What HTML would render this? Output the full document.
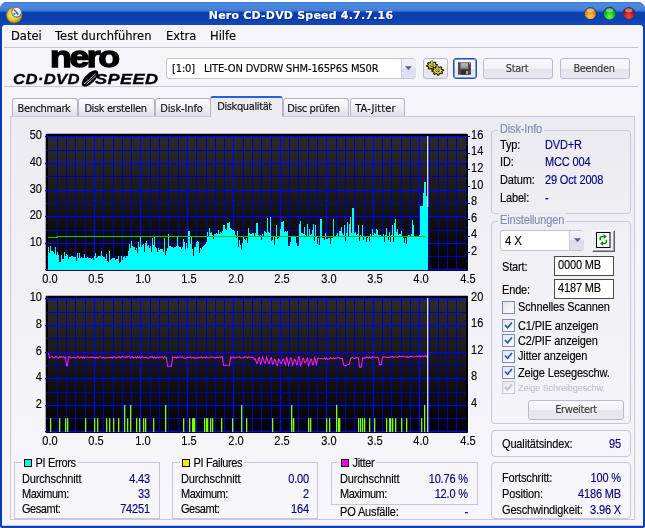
<!DOCTYPE html>
<html lang="de"><head><meta charset="utf-8"><title>Nero CD-DVD Speed 4.7.7.16</title>
<style>
html,body{margin:0;padding:0}
body{width:645px;height:528px;overflow:hidden;position:relative;background:#fff;font-family:"Liberation Sans",sans-serif;font-size:11px;letter-spacing:-.15px;color:#000;line-height:13px;-webkit-text-stroke:.13px}
.abs{position:absolute;white-space:nowrap}
#frame{left:0;top:2px;width:645px;height:526px;border-radius:7px 7px 2px 2px;background:#0b3fb4}
#title{left:0;top:2px;width:645px;height:23px;border-radius:7px 7px 0 0;background:linear-gradient(#3d7ad6 0,#4b8adf 2px,#4483da 8px,#2a63c8 9.5px,#0e41b0 10.5px,#0c3eac 16px,#1549b9 23px)}
#ttext{left:0;top:9px;text-shadow:1px 1px 0 #0a2c8a;width:602px;text-align:center;color:#fff;font:bold 11px "DejaVu Sans","Liberation Sans",sans-serif;letter-spacing:.2px}
#client{box-sizing:border-box;left:2px;top:25px;width:640.5px;height:501px;background:#f4f4f9;border-radius:3px 3px 0 0;border-bottom:1px solid #cbc7da}
.menu{font:11.5px "DejaVu Sans","Liberation Sans",sans-serif;top:29.3px;letter-spacing:0}
.sep{height:1px;background:#c6c6d4;left:4px;width:634px}
.tah{font-family:"DejaVu Sans Condensed","DejaVu Sans","Liberation Sans",sans-serif;font-size:11px;letter-spacing:-.38px}
.btn{box-sizing:border-box;border:1px solid #b9b9cb;border-radius:3px;background:linear-gradient(#f8f8fc 0,#f1f1f7 50%,#e4e4ee 50%,#e9e9f1 100%);color:#3a3a3a;text-align:center}
.tab{box-sizing:border-box;border:1px solid #b4b4c6;border-bottom:none;border-radius:3px 3px 0 0;background:linear-gradient(#fbfbfe,#ededf4 60%,#dfdfea);top:98px;height:18px;text-align:center;line-height:19.500px;padding-right:2px;color:#0c0c0c}
#panel{box-sizing:border-box;left:10px;top:116px;width:625px;height:404px;border:1px solid #c9c9d9;background:linear-gradient(#ebebf1,#f7f7fb)}
.grp{box-sizing:border-box;border:1px solid #c6c6d8}
.rg{border-radius:4px}
.gt{background:#f5f5fa;color:#7f8db1;padding:0 2px}
.val{color:#000080}
.ax{font-size:12px;letter-spacing:0;line-height:15px;height:15px;transform:scaleX(.92)}
.inp{box-sizing:border-box;border:1px solid #4a4a4a;background:#fff}
.cb{box-sizing:border-box;width:13px;height:13px;border:1px solid #7c8eae;background:linear-gradient(135deg,#e4e4ea,#fdfdfe);left:502px}
.lg{top:72.3px;font:italic bold 14.5px/14px "Liberation Sans",sans-serif;transform-origin:0 0;letter-spacing:.3px;-webkit-text-stroke:.3px #000}
.tx{transform:scaleY(1.08);transform-origin:0 79%}
.sq{box-sizing:border-box;width:8px;height:8px;border:1px solid #000}
</style></head><body><div id="root" style="position:absolute;left:0;top:0;width:645px;height:528px;will-change:transform">
<div id="frame" class="abs"></div>
<div id="title" class="abs"></div>
<!-- app icon -->
<svg class="abs" style="left:4px;top:3px" width="22" height="22" viewBox="0 0 22 22">
<defs><radialGradient id="gd" cx=".45" cy=".45" r=".6"><stop offset="0" stop-color="#fff6a0"/><stop offset=".55" stop-color="#e8cc30"/><stop offset="1" stop-color="#a88a10"/></radialGradient></defs>
<circle cx="10.2" cy="12.2" r="7.800" fill="url(#gd)" stroke="#8a7214" stroke-width=".6"/>
<circle cx="12.6" cy="9.2" r="4.9" fill="#e8ecf4" stroke="#6a6f7c" stroke-width="1.100"/>
<path d="M10 6.8l3 3" stroke="#e04020" stroke-width="1.6"/><path d="M12.4 9.4l2 2.2" stroke="#2080d0" stroke-width="2"/><circle cx="10.4" cy="11" r="1.1" fill="#30a040"/>
</svg>
<div id="ttext" class="abs">Nero CD-DVD Speed 4.7.7.16</div>
<svg class="abs" style="left:580px;top:4px" width="60" height="20" viewBox="0 0 60 20">
<defs>
<radialGradient id="bo" cx=".5" cy=".75" r=".7"><stop offset="0" stop-color="#ffc850"/><stop offset=".6" stop-color="#e89018"/><stop offset="1" stop-color="#a85c06"/></radialGradient>
<radialGradient id="bg" cx=".5" cy=".75" r=".7"><stop offset="0" stop-color="#60ff50"/><stop offset=".6" stop-color="#18b818"/><stop offset="1" stop-color="#0a6a0a"/></radialGradient>
<radialGradient id="br" cx=".5" cy=".75" r=".7"><stop offset="0" stop-color="#f05050"/><stop offset=".6" stop-color="#c01818"/><stop offset="1" stop-color="#700808"/></radialGradient>
</defs>
<circle cx="10.3" cy="9.6" r="6" fill="url(#bo)" stroke="#0a3290" stroke-width=".8"/>
<circle cx="29.6" cy="9.6" r="6.3" fill="url(#bg)" stroke="#0a3290" stroke-width=".8"/>
<circle cx="48.8" cy="9.6" r="6" fill="url(#br)" stroke="#0a3290" stroke-width=".8"/>
<ellipse cx="10.3" cy="6.3" rx="3.6" ry="2" fill="#fff" opacity=".45"/>
<ellipse cx="29.6" cy="6.3" rx="3.6" ry="2" fill="#fff" opacity=".45"/>
<ellipse cx="48.8" cy="6.3" rx="3.6" ry="2" fill="#fff" opacity=".45"/>
</svg>
<div id="client" class="abs"></div>
<!-- menu -->
<div class="abs menu" style="left:11px">Datei</div>
<div class="abs menu" style="left:55px">Test durchführen</div>
<div class="abs menu" style="left:166px">Extra</div>
<div class="abs menu" style="left:210px">Hilfe</div>
<div class="abs sep" style="top:47px"></div>
<div class="abs sep" style="top:86px"></div>
<!-- logo -->
<div class="abs" id="nero" style="left:49.9px;top:41.8px;font:bold 30px/30px 'Liberation Sans',sans-serif;letter-spacing:-2px;-webkit-text-stroke:1.3px #000;transform-origin:0 0;transform:scale(1.188,1)">nero</div>
<div class="abs lg" id="cds" style="left:13px;transform:scale(1.151,1)">CD·DVD</div><div class="abs lg" id="cds2" style="left:95px;transform:scale(1.253,1)">SPEED</div>
<svg class="abs" style="left:79px;top:70px" width="22" height="17" viewBox="0 0 22 17"><ellipse cx="11" cy="8.5" rx="10.5" ry="4.9" transform="rotate(-44 11 8.5)" fill="#000"/><path d="M5 14Q10 10.500 16.500 3.500M7.500 14.200Q12 10.500 17.200 5.500" stroke="#f3f3f9" stroke-width=".8" fill="none"/></svg>
<!-- drive combo -->
<div class="abs" style="box-sizing:border-box;left:166px;top:58px;width:250px;height:21px;border:1px solid #c3c3d3;border-radius:3px;background:#fff"></div>
<div class="abs" style="left:401px;top:59px;width:14px;height:19px;background:linear-gradient(#f0f0fa 0,#ebebf6 50%,#dcdcee 50%,#e0e0f0 100%);border-left:1px solid #c9c9dd;border-radius:0 2px 2px 0"></div>
<svg class="abs" style="left:405px;top:66px" width="7" height="4" viewBox="0 0 7 4"><path d="M0 .2h7L3.500 3.900z" fill="#5558a8"/></svg>
<div class="abs tah" style="left:172px;top:62px;letter-spacing:-.14px;white-space:pre">[1:0]   LITE-ON DVDRW SHM-165P6S MS0R</div>
<!-- toolbar buttons -->
<div class="abs btn" style="left:423px;top:58px;width:25px;height:21px"></div>
<svg class="abs" style="left:424px;top:59px" width="22" height="18" viewBox="0 0 22 18">
<g stroke="#1a1a00" stroke-width="1.1" fill="#f4ec00" stroke-linejoin="round">
<path d="M13.4 5.8L13.5 6.6L11.9 7.2L11.7 7.8L12.6 8.9L11.9 9.6L10.3 9.1L9.6 9.4L9.2 10.7L8.1 10.8L7.4 9.6L6.6 9.4L5.1 10.1L4.3 9.6L4.9 8.3L4.5 7.8L2.8 7.4L2.7 6.6L4.3 6.0L4.5 5.4L3.6 4.3L4.3 3.6L5.9 4.1L6.6 3.8L7.0 2.5L8.1 2.4L8.8 3.6L9.6 3.8L11.1 3.1L11.9 3.6L11.3 4.9L11.7 5.4Z"/><ellipse cx="8.1" cy="6.6" rx="1.7" ry="1.2" fill="#f3f3f9" stroke-width=".8"/>
<path d="M19.4 10.7L19.5 11.6L17.8 12.2L17.6 12.8L18.5 14.1L17.8 14.8L16.0 14.3L15.3 14.6L14.9 16.0L13.7 16.1L12.9 14.8L12.1 14.6L10.5 15.4L9.6 14.8L10.2 13.4L9.8 12.9L8.0 12.5L7.9 11.6L9.6 11.0L9.8 10.4L8.9 9.1L9.6 8.4L11.4 8.9L12.1 8.6L12.5 7.2L13.7 7.1L14.5 8.4L15.3 8.6L16.9 7.8L17.8 8.4L17.2 9.8L17.6 10.3Z"/><ellipse cx="13.7" cy="11.6" rx="1.8" ry="1.3" fill="#f3f3f9" stroke-width=".8"/>
</g>
<path d="M8.1 1.2V7M13.700 6.400V12" stroke="#8a8a8a" stroke-width="1.800"/><path d="M7.600 1.500V6.600M13.200 6.700V11.600" stroke="#d0d0d0" stroke-width=".7"/>
</svg>
<div class="abs btn" style="left:453px;top:58px;width:24px;height:21px;border:1px solid #2050c4;box-shadow:inset 0 0 0 1px #7d9fe6;border-radius:3px"></div>
<svg class="abs" style="left:458px;top:62px" width="14" height="13" viewBox="0 0 14 13"><path d="M0 .3h12.200l.8.800V12.700H0z" fill="#4c4c4c"/><rect x="2.500" y=".8" width="7.500" height="5.700" fill="#9c9c9c"/><rect x="3" y="1.300" width="6.500" height="2.500" fill="#b4b4b4"/><rect x="3" y="7.800" width="8" height="4.900" fill="#2e2e2e"/><rect x="8" y="8.800" width="2.200" height="3.500" fill="#a8a8a8"/><rect x="11.300" y="1.200" width="1" height="1" fill="#e0e0e0"/></svg>
<div class="abs btn tah" style="left:483px;top:58px;width:70px;height:21px;line-height:20.500px;padding-right:2px">Start</div>
<div class="abs btn tah" style="left:560px;top:58px;width:70px;height:21px;line-height:20.500px;padding-right:2px">Beenden</div>
<!-- tabs -->
<div class="abs tab tah" style="left:12px;width:66px">Benchmark</div>
<div class="abs tab tah" style="left:78px;width:77px">Disk erstellen</div>
<div class="abs tab tah" style="left:155px;width:56px;letter-spacing:-.1px;padding-right:3px">Disk-Info</div>
<div class="abs tab tah" style="left:283px;width:66px;padding-right:5px">Disc prüfen</div>
<div class="abs tab tah" style="left:350px;width:55px;padding-right:4px;letter-spacing:.1px">TA-Jitter</div>
<div id="panel" class="abs"></div>
<div class="abs tab tah" style="left:210px;width:73px;top:96px;height:21px;background:#ebebf1;border-top:2px solid #2463d6;line-height:18px;padding-right:4px">Diskqualität</div>

<svg class="abs" style="left:0;top:0" width="645" height="528" viewBox="0 0 645 528">
<defs>
<linearGradient id="cg" x1="0" y1="0" x2="0" y2="1"><stop offset="0" stop-color="#2b2b2b"/><stop offset="1" stop-color="#020202"/></linearGradient>
</defs>
<rect x="45.7" y="133.8" width="422.3" height="137.2" rx="1" fill="#000"/>
<rect x="48" y="136" width="418" height="134" fill="url(#cg)"/>
<line x1="57.5" y1="136" x2="57.5" y2="270" stroke="#0000b4" stroke-width="1"/>
<line x1="66.5" y1="136" x2="66.5" y2="270" stroke="#0000b4" stroke-width="1"/>
<line x1="75.5" y1="136" x2="75.5" y2="270" stroke="#0000b4" stroke-width="1"/>
<line x1="85.5" y1="136" x2="85.5" y2="270" stroke="#0000b4" stroke-width="1"/>
<line x1="94.5" y1="136" x2="94.5" y2="270" stroke="#0000ff" stroke-width="1.25"/>
<line x1="103.5" y1="136" x2="103.5" y2="270" stroke="#0000b4" stroke-width="1"/>
<line x1="113.5" y1="136" x2="113.5" y2="270" stroke="#0000b4" stroke-width="1"/>
<line x1="122.5" y1="136" x2="122.5" y2="270" stroke="#0000b4" stroke-width="1"/>
<line x1="131.5" y1="136" x2="131.5" y2="270" stroke="#0000b4" stroke-width="1"/>
<line x1="140.5" y1="136" x2="140.5" y2="270" stroke="#0000ff" stroke-width="1.25"/>
<line x1="150.5" y1="136" x2="150.5" y2="270" stroke="#0000b4" stroke-width="1"/>
<line x1="159.5" y1="136" x2="159.5" y2="270" stroke="#0000b4" stroke-width="1"/>
<line x1="168.5" y1="136" x2="168.5" y2="270" stroke="#0000b4" stroke-width="1"/>
<line x1="178.5" y1="136" x2="178.5" y2="270" stroke="#0000b4" stroke-width="1"/>
<line x1="187.5" y1="136" x2="187.5" y2="270" stroke="#0000ff" stroke-width="1.25"/>
<line x1="196.5" y1="136" x2="196.5" y2="270" stroke="#0000b4" stroke-width="1"/>
<line x1="206.5" y1="136" x2="206.5" y2="270" stroke="#0000b4" stroke-width="1"/>
<line x1="215.5" y1="136" x2="215.5" y2="270" stroke="#0000b4" stroke-width="1"/>
<line x1="224.5" y1="136" x2="224.5" y2="270" stroke="#0000b4" stroke-width="1"/>
<line x1="233.5" y1="136" x2="233.5" y2="270" stroke="#0000ff" stroke-width="1.25"/>
<line x1="243.5" y1="136" x2="243.5" y2="270" stroke="#0000b4" stroke-width="1"/>
<line x1="252.5" y1="136" x2="252.5" y2="270" stroke="#0000b4" stroke-width="1"/>
<line x1="261.5" y1="136" x2="261.5" y2="270" stroke="#0000b4" stroke-width="1"/>
<line x1="271.5" y1="136" x2="271.5" y2="270" stroke="#0000b4" stroke-width="1"/>
<line x1="280.5" y1="136" x2="280.5" y2="270" stroke="#0000ff" stroke-width="1.25"/>
<line x1="289.5" y1="136" x2="289.5" y2="270" stroke="#0000b4" stroke-width="1"/>
<line x1="298.5" y1="136" x2="298.5" y2="270" stroke="#0000b4" stroke-width="1"/>
<line x1="308.5" y1="136" x2="308.5" y2="270" stroke="#0000b4" stroke-width="1"/>
<line x1="317.5" y1="136" x2="317.5" y2="270" stroke="#0000b4" stroke-width="1"/>
<line x1="326.5" y1="136" x2="326.5" y2="270" stroke="#0000ff" stroke-width="1.25"/>
<line x1="336.5" y1="136" x2="336.5" y2="270" stroke="#0000b4" stroke-width="1"/>
<line x1="345.5" y1="136" x2="345.5" y2="270" stroke="#0000b4" stroke-width="1"/>
<line x1="354.5" y1="136" x2="354.5" y2="270" stroke="#0000b4" stroke-width="1"/>
<line x1="364.5" y1="136" x2="364.5" y2="270" stroke="#0000b4" stroke-width="1"/>
<line x1="373.5" y1="136" x2="373.5" y2="270" stroke="#0000ff" stroke-width="1.25"/>
<line x1="382.5" y1="136" x2="382.5" y2="270" stroke="#0000b4" stroke-width="1"/>
<line x1="391.5" y1="136" x2="391.5" y2="270" stroke="#0000b4" stroke-width="1"/>
<line x1="401.5" y1="136" x2="401.5" y2="270" stroke="#0000b4" stroke-width="1"/>
<line x1="410.5" y1="136" x2="410.5" y2="270" stroke="#0000b4" stroke-width="1"/>
<line x1="419.5" y1="136" x2="419.5" y2="270" stroke="#0000ff" stroke-width="1.25"/>
<line x1="429.5" y1="136" x2="429.5" y2="270" stroke="#0000b4" stroke-width="1"/>
<line x1="438.5" y1="136" x2="438.5" y2="270" stroke="#0000b4" stroke-width="1"/>
<line x1="447.5" y1="136" x2="447.5" y2="270" stroke="#0000b4" stroke-width="1"/>
<line x1="456.5" y1="136" x2="456.5" y2="270" stroke="#0000b4" stroke-width="1"/>
<line x1="45" y1="136.5" x2="466" y2="136.5" stroke="#0000ff" stroke-width="1.25"/>
<line x1="46" y1="150.5" x2="466" y2="150.5" stroke="#0000b4" stroke-width="1"/>
<line x1="45" y1="163.5" x2="466" y2="163.5" stroke="#0000ff" stroke-width="1.25"/>
<line x1="46" y1="176.5" x2="466" y2="176.5" stroke="#0000b4" stroke-width="1"/>
<line x1="45" y1="190.5" x2="466" y2="190.5" stroke="#0000ff" stroke-width="1.25"/>
<line x1="46" y1="203.5" x2="466" y2="203.5" stroke="#0000b4" stroke-width="1"/>
<line x1="45" y1="216.5" x2="466" y2="216.5" stroke="#0000ff" stroke-width="1.25"/>
<line x1="46" y1="230.5" x2="466" y2="230.5" stroke="#0000b4" stroke-width="1"/>
<line x1="45" y1="243.5" x2="466" y2="243.5" stroke="#0000ff" stroke-width="1.25"/>
<line x1="46" y1="256.5" x2="466" y2="256.5" stroke="#0000b4" stroke-width="1"/>
<line x1="45" y1="269.5" x2="466" y2="269.5" stroke="#0000ff" stroke-width="1.25"/>
<path d="M48 270.0V247H49V253H50V246H51V251H52V251H53V252H54V254H55V247H56V255H57V252H58V255H59V262H60V262H61V255H62V259H63V259H64V252H65V256H66V254H67V255H68V259H69V257H70V257H71V256H72V256H73V257H74V257H75V257H76V261H77V253H78V258H79V253H80V258H81V257H82V258H83V258H84V254H85V258H86V258H87V257H88V258H89V258H90V258H91V259H92V258H93V260H94V256H95V253H96V258H97V257H98V256H99V256H100V256H101V251H102V256H103V257H104V257H105V259H106V254H107V261H108V262H109V251H110V260H111V259H112V258H113V258H114V258H115V260H116V259H117V259H118V256H119V263H120V262H121V256H122V260H123V257H124V256H125V258H126V256H127V256H128V251H129V244H130V248H131V241H132V246H133V247H134V247H135V250H136V248H137V253H138V242H139V247H140V236H141V247H142V245H143V244H144V252H145V243H146V241H147V246H148V245H149V248H150V246H151V252H152V238H153V245H154V236H155V247H156V248H157V252H158V248H159V250H160V249H161V249H162V249H163V252H164V238H165V255H166V251H167V248H168V234H169V246H170V246H171V247H172V247H173V248H174V247H175V247H176V246H177V236H178V246H179V247H180V247H181V249H182V247H183V239H184V242H185V249H186V243H187V248H188V231H189V231H190V244H191V236H192V249H193V256H194V247H195V247H196V242H197V241H198V242H199V253H200V248H201V249H202V247H203V246H204V245H205V244H206V242H207V232H208V237H209V228H210V233H211V232H212V235H213V239H214V234H215V234H216V233H217V234H218V230H219V234H220V232H221V233H222V231H223V225H224V225H225V229H226V230H227V223H228V223H229V222H230V228H231V229H232V230H233V230H234V231H235V235H236V238H237V231H238V247H239V240H240V245H241V249H242V243H243V237H244V239H245V240H246V238H247V243H248V228H249V233H250V234H251V234H252V233H253V233H254V237H255V233H256V223H257V223H258V235H259V236H260V235H261V240H262V234H263V236H264V231H265V232H266V233H267V218H268V232H269V233H270V217H271V241H272V240H273V236H274V245H275V237H276V225H277V239H278V238H279V236H280V229H281V222H282V222H283V221H284V232H285V231H286V232H287V231H288V246H289V246H290V242H291V237H292V237H293V237H294V237H295V237H296V243H297V246H298V246H299V224H300V221H301V233H302V233H303V234H304V227H305V235H306V236H307V224H308V237H309V229H310V235H311V234H312V230H313V224H314V241H315V225H316V236H317V244H318V238H319V245H320V219H321V219H322V238H323V238H324V240H325V233H326V239H327V239H328V238H329V238H330V244H331V238H332V238H333V219H334V236H335V236H336V235H337V233H338V236H339V231H340V231H341V227H342V233H343V235H344V225H345V241H346V233H347V222H348V236H349V224H350V217H351V233H352V208H353V208H354V233H355V232H356V235H357V234H358V225H359V241H360V235H361V236H362V225H363V240H364V236H365V236H366V242H367V238H368V236H369V241H370V234H371V236H372V229H373V235H374V233H375V234H376V229H377V230H378V235H379V235H380V235H381V237H382V236H383V234H384V242H385V235H386V228H387V236H388V240H389V232H390V242H391V235H392V225H393V242H394V223H395V219H396V232H397V229H398V235H399V234H400V234H401V231H402V237H403V238H404V243H405V238H406V244H407V236H408V235H409V235H410V236H411V234H412V220H413V225H414V236H415V237H416V237H417V236H418V236H419V235H420V206H421V206H422V206H423V193H424V182H425V182H426V196H427V198H428V270.0Z" fill="#00ffff"/>
<path d="M48 237.5H57V236.5H426" stroke="#00d000" stroke-width="1.2" fill="none"/>
<rect x="427.1" y="136" width="1.2" height="71" fill="#e8e8e8"/>
<rect x="45.7" y="295.8" width="422.3" height="137.2" rx="1" fill="#000"/>
<rect x="48" y="298" width="418" height="134" fill="url(#cg)"/>
<line x1="57.5" y1="298" x2="57.5" y2="432" stroke="#0000b4" stroke-width="1"/>
<line x1="66.5" y1="298" x2="66.5" y2="432" stroke="#0000b4" stroke-width="1"/>
<line x1="75.5" y1="298" x2="75.5" y2="432" stroke="#0000b4" stroke-width="1"/>
<line x1="85.5" y1="298" x2="85.5" y2="432" stroke="#0000b4" stroke-width="1"/>
<line x1="94.5" y1="298" x2="94.5" y2="432" stroke="#0000ff" stroke-width="1.25"/>
<line x1="103.5" y1="298" x2="103.5" y2="432" stroke="#0000b4" stroke-width="1"/>
<line x1="113.5" y1="298" x2="113.5" y2="432" stroke="#0000b4" stroke-width="1"/>
<line x1="122.5" y1="298" x2="122.5" y2="432" stroke="#0000b4" stroke-width="1"/>
<line x1="131.5" y1="298" x2="131.5" y2="432" stroke="#0000b4" stroke-width="1"/>
<line x1="140.5" y1="298" x2="140.5" y2="432" stroke="#0000ff" stroke-width="1.25"/>
<line x1="150.5" y1="298" x2="150.5" y2="432" stroke="#0000b4" stroke-width="1"/>
<line x1="159.5" y1="298" x2="159.5" y2="432" stroke="#0000b4" stroke-width="1"/>
<line x1="168.5" y1="298" x2="168.5" y2="432" stroke="#0000b4" stroke-width="1"/>
<line x1="178.5" y1="298" x2="178.5" y2="432" stroke="#0000b4" stroke-width="1"/>
<line x1="187.5" y1="298" x2="187.5" y2="432" stroke="#0000ff" stroke-width="1.25"/>
<line x1="196.5" y1="298" x2="196.5" y2="432" stroke="#0000b4" stroke-width="1"/>
<line x1="206.5" y1="298" x2="206.5" y2="432" stroke="#0000b4" stroke-width="1"/>
<line x1="215.5" y1="298" x2="215.5" y2="432" stroke="#0000b4" stroke-width="1"/>
<line x1="224.5" y1="298" x2="224.5" y2="432" stroke="#0000b4" stroke-width="1"/>
<line x1="233.5" y1="298" x2="233.5" y2="432" stroke="#0000ff" stroke-width="1.25"/>
<line x1="243.5" y1="298" x2="243.5" y2="432" stroke="#0000b4" stroke-width="1"/>
<line x1="252.5" y1="298" x2="252.5" y2="432" stroke="#0000b4" stroke-width="1"/>
<line x1="261.5" y1="298" x2="261.5" y2="432" stroke="#0000b4" stroke-width="1"/>
<line x1="271.5" y1="298" x2="271.5" y2="432" stroke="#0000b4" stroke-width="1"/>
<line x1="280.5" y1="298" x2="280.5" y2="432" stroke="#0000ff" stroke-width="1.25"/>
<line x1="289.5" y1="298" x2="289.5" y2="432" stroke="#0000b4" stroke-width="1"/>
<line x1="298.5" y1="298" x2="298.5" y2="432" stroke="#0000b4" stroke-width="1"/>
<line x1="308.5" y1="298" x2="308.5" y2="432" stroke="#0000b4" stroke-width="1"/>
<line x1="317.5" y1="298" x2="317.5" y2="432" stroke="#0000b4" stroke-width="1"/>
<line x1="326.5" y1="298" x2="326.5" y2="432" stroke="#0000ff" stroke-width="1.25"/>
<line x1="336.5" y1="298" x2="336.5" y2="432" stroke="#0000b4" stroke-width="1"/>
<line x1="345.5" y1="298" x2="345.5" y2="432" stroke="#0000b4" stroke-width="1"/>
<line x1="354.5" y1="298" x2="354.5" y2="432" stroke="#0000b4" stroke-width="1"/>
<line x1="364.5" y1="298" x2="364.5" y2="432" stroke="#0000b4" stroke-width="1"/>
<line x1="373.5" y1="298" x2="373.5" y2="432" stroke="#0000ff" stroke-width="1.25"/>
<line x1="382.5" y1="298" x2="382.5" y2="432" stroke="#0000b4" stroke-width="1"/>
<line x1="391.5" y1="298" x2="391.5" y2="432" stroke="#0000b4" stroke-width="1"/>
<line x1="401.5" y1="298" x2="401.5" y2="432" stroke="#0000b4" stroke-width="1"/>
<line x1="410.5" y1="298" x2="410.5" y2="432" stroke="#0000b4" stroke-width="1"/>
<line x1="419.5" y1="298" x2="419.5" y2="432" stroke="#0000ff" stroke-width="1.25"/>
<line x1="429.5" y1="298" x2="429.5" y2="432" stroke="#0000b4" stroke-width="1"/>
<line x1="438.5" y1="298" x2="438.5" y2="432" stroke="#0000b4" stroke-width="1"/>
<line x1="447.5" y1="298" x2="447.5" y2="432" stroke="#0000b4" stroke-width="1"/>
<line x1="456.5" y1="298" x2="456.5" y2="432" stroke="#0000b4" stroke-width="1"/>
<line x1="45" y1="298.5" x2="466" y2="298.5" stroke="#0000ff" stroke-width="1.25"/>
<line x1="46" y1="312.5" x2="466" y2="312.5" stroke="#0000b4" stroke-width="1"/>
<line x1="45" y1="325.5" x2="466" y2="325.5" stroke="#0000ff" stroke-width="1.25"/>
<line x1="46" y1="338.5" x2="466" y2="338.5" stroke="#0000b4" stroke-width="1"/>
<line x1="45" y1="352.5" x2="466" y2="352.5" stroke="#0000ff" stroke-width="1.25"/>
<line x1="46" y1="365.5" x2="466" y2="365.5" stroke="#0000b4" stroke-width="1"/>
<line x1="45" y1="378.5" x2="466" y2="378.5" stroke="#0000ff" stroke-width="1.25"/>
<line x1="46" y1="392.5" x2="466" y2="392.5" stroke="#0000b4" stroke-width="1"/>
<line x1="45" y1="405.5" x2="466" y2="405.5" stroke="#0000ff" stroke-width="1.25"/>
<line x1="46" y1="418.5" x2="466" y2="418.5" stroke="#0000b4" stroke-width="1"/>
<line x1="45" y1="431.5" x2="466" y2="431.5" stroke="#0000ff" stroke-width="1.25"/>
<g fill="#80ff00"><rect x="50" y="418.2" width="1.3" height="13.8"/>
<rect x="59" y="418.2" width="1.3" height="13.8"/>
<rect x="65" y="418.2" width="1.3" height="13.8"/>
<rect x="67" y="418.2" width="1.3" height="13.8"/>
<rect x="85" y="418.2" width="1.3" height="13.8"/>
<rect x="94" y="418.2" width="1.3" height="13.8"/>
<rect x="97" y="418.2" width="1.3" height="13.8"/>
<rect x="106" y="418.2" width="1.3" height="13.8"/>
<rect x="109" y="418.2" width="1.3" height="13.8"/>
<rect x="113" y="418.2" width="1.3" height="13.8"/>
<rect x="118" y="418.2" width="1.3" height="13.8"/>
<rect x="127" y="418.2" width="1.3" height="13.8"/>
<rect x="136" y="418.2" width="1.3" height="13.8"/>
<rect x="139" y="418.2" width="1.3" height="13.8"/>
<rect x="143" y="418.2" width="1.3" height="13.8"/>
<rect x="145" y="418.2" width="1.3" height="13.8"/>
<rect x="153" y="418.2" width="1.3" height="13.8"/>
<rect x="183" y="418.2" width="1.3" height="13.8"/>
<rect x="189" y="418.2" width="1.3" height="13.8"/>
<rect x="192" y="418.2" width="1.3" height="13.8"/>
<rect x="193" y="418.2" width="1.3" height="13.8"/>
<rect x="194" y="418.2" width="1.3" height="13.8"/>
<rect x="204" y="418.2" width="1.3" height="13.8"/>
<rect x="206" y="418.2" width="1.3" height="13.8"/>
<rect x="207" y="418.2" width="1.3" height="13.8"/>
<rect x="210" y="418.2" width="1.3" height="13.8"/>
<rect x="212" y="418.2" width="1.3" height="13.8"/>
<rect x="221" y="418.2" width="1.3" height="13.8"/>
<rect x="232" y="418.2" width="1.3" height="13.8"/>
<rect x="246" y="418.2" width="1.3" height="13.8"/>
<rect x="272" y="418.2" width="1.3" height="13.8"/>
<rect x="291" y="418.2" width="1.3" height="13.8"/>
<rect x="293" y="418.2" width="1.3" height="13.8"/>
<rect x="308" y="418.2" width="1.3" height="13.8"/>
<rect x="310" y="418.2" width="1.3" height="13.8"/>
<rect x="326" y="418.2" width="1.3" height="13.8"/>
<rect x="329" y="418.2" width="1.3" height="13.8"/>
<rect x="338" y="418.2" width="1.3" height="13.8"/>
<rect x="339" y="418.2" width="1.3" height="13.8"/>
<rect x="358" y="418.2" width="1.3" height="13.8"/>
<rect x="360" y="418.2" width="1.3" height="13.8"/>
<rect x="362" y="418.2" width="1.3" height="13.8"/>
<rect x="364" y="418.2" width="1.3" height="13.8"/>
<rect x="369" y="418.2" width="1.3" height="13.8"/>
<rect x="374" y="418.2" width="1.3" height="13.8"/>
<rect x="386" y="418.2" width="1.3" height="13.8"/>
<rect x="389" y="418.2" width="1.3" height="13.8"/>
<rect x="390" y="418.2" width="1.3" height="13.8"/>
<rect x="392" y="418.2" width="1.3" height="13.8"/>
<rect x="395" y="418.2" width="1.3" height="13.8"/>
<rect x="401" y="418.2" width="1.3" height="13.8"/>
<rect x="406" y="418.2" width="1.3" height="13.8"/>
<rect x="421" y="418.2" width="1.3" height="13.8"/>
<rect x="124" y="404.9" width="1.3" height="27.1"/>
<rect x="130" y="404.9" width="1.3" height="27.1"/>
<rect x="165" y="404.9" width="1.3" height="27.1"/>
<rect x="241" y="404.9" width="1.3" height="27.1"/>
<rect x="291" y="404.9" width="1.3" height="27.1"/>
<rect x="336" y="404.9" width="1.3" height="27.1"/>
<rect x="424" y="404.9" width="1.3" height="27.1"/></g>
<path d="M48.5 353.0L49.5 358.0L50.5 357.4L51.5 356.9L52.5 356.6L53.5 357.8L54.5 357.9L55.5 356.6L56.5 356.6L57.5 357.4L58.5 358.1L59.5 356.7L60.5 357.5L61.5 356.7L62.5 357.2L63.5 356.8L64.5 357.9L65.5 356.9L66.5 365.7L67.5 365.7L68.5 356.8L69.5 356.8L70.5 357.9L71.5 357.8L72.5 357.5L73.5 357.3L74.5 357.5L75.5 358.0L76.5 357.8L77.5 357.0L78.5 356.7L79.5 358.1L80.5 357.3L81.5 356.9L82.5 358.1L83.5 356.8L84.5 358.0L85.5 357.2L86.5 357.3L87.5 357.1L88.5 357.7L89.5 357.5L90.5 357.2L91.5 357.5L92.5 357.1L93.5 357.4L94.5 357.5L95.5 358.1L96.5 357.2L97.5 357.4L98.5 357.8L99.5 356.9L100.5 356.9L101.5 357.4L102.5 357.9L103.5 357.4L104.5 358.0L105.5 357.9L106.5 357.5L107.5 358.0L108.5 357.4L109.5 357.3L110.5 358.1L111.5 357.1L112.5 358.0L113.5 357.0L114.5 356.9L115.5 357.3L116.5 358.1L117.5 357.3L118.5 357.5L119.5 356.6L120.5 357.9L121.5 356.8L122.5 356.6L123.5 357.0L124.5 356.8L125.5 357.8L126.5 356.6L127.5 357.4L128.5 356.6L129.5 356.7L130.5 357.9L131.5 356.9L132.5 356.7L133.5 358.0L134.5 357.6L135.5 356.9L136.5 357.9L137.5 356.7L138.5 357.7L139.5 356.8L140.5 357.9L141.5 357.3L142.5 356.7L143.5 357.8L144.5 357.7L145.5 357.3L146.5 357.6L147.5 358.1L148.5 357.9L149.5 357.9L150.5 356.7L151.5 357.1L152.5 356.7L153.5 357.9L154.5 356.9L155.5 358.0L156.5 357.3L157.5 357.1L158.5 357.6L159.5 356.8L160.5 357.3L161.5 357.2L162.5 356.7L163.5 358.0L164.5 356.6L165.5 357.1L166.5 357.5L167.5 366.3L168.5 366.3L169.5 366.3L170.5 366.3L171.5 366.3L172.5 356.9L173.5 357.4L174.5 357.9L175.5 357.0L176.5 358.1L177.5 356.8L178.5 357.7L179.5 357.1L180.5 356.6L181.5 357.2L182.5 357.1L183.5 357.7L184.5 358.1L185.5 358.1L186.5 357.9L187.5 357.2L188.5 357.5L189.5 357.3L190.5 356.7L191.5 357.9L192.5 357.8L193.5 357.1L194.5 358.1L195.5 358.1L196.5 357.6L197.5 358.0L198.5 357.6L199.5 357.8L200.5 357.2L201.5 357.2L202.5 357.8L203.5 357.2L204.5 357.4L205.5 357.9L206.5 356.7L207.5 357.8L208.5 357.9L209.5 358.0L210.5 357.1L211.5 356.8L212.5 356.9L213.5 357.5L214.5 357.7L215.5 358.1L216.5 357.1L217.5 357.3L218.5 357.6L219.5 357.1L220.5 357.4L221.5 356.7L222.5 357.0L223.5 365.3L224.5 365.3L225.5 365.3L226.5 365.3L227.5 365.3L228.5 365.3L229.5 365.3L230.5 356.9L231.5 358.1L232.5 357.3L233.5 356.6L234.5 357.9L235.5 357.8L236.5 357.2L237.5 357.3L238.5 357.1L239.5 356.9L240.5 357.9L241.5 357.7L242.5 357.7L243.5 358.1L244.5 356.7L245.5 356.9L246.5 357.0L247.5 358.1L248.5 356.8L249.5 357.0L250.5 357.4L251.5 357.0L252.5 357.4L253.5 357.8L254.5 359.5L255.5 359.1L256.5 363.1L257.5 363.1L258.5 358.3L259.5 357.5L260.5 364.7L261.5 362.1L262.5 357.1L263.5 359.4L264.5 362.9L265.5 362.9L266.5 357.1L267.5 359.5L268.5 363.4L269.5 363.2L270.5 358.6L271.5 357.8L272.5 364.1L273.5 363.6L274.5 359.6L275.5 360.1L276.5 365.1L277.5 365.3L278.5 359.1L279.5 360.2L280.5 363.1L281.5 363.1L282.5 360.1L283.5 359.0L284.5 362.7L285.5 365.4L286.5 357.0L287.5 360.0L288.5 365.3L289.5 362.6L290.5 358.0L291.5 358.0L292.5 365.3L293.5 362.9L294.5 359.2L295.5 360.3L296.5 364.6L297.5 364.3L298.5 356.8L299.5 357.2L300.5 365.6L301.5 364.1L302.5 359.1L303.5 358.4L304.5 362.5L305.5 362.7L306.5 360.3L307.5 357.6L308.5 365.6L309.5 363.9L310.5 359.7L311.5 359.1L312.5 364.7L313.5 364.6L314.5 357.8L315.5 359.9L316.5 365.4L317.5 358.2L318.5 358.3L319.5 358.2L320.5 358.4L321.5 358.8L322.5 358.7L323.5 358.7L324.5 357.9L325.5 359.2L326.5 357.9L327.5 359.2L328.5 358.9L329.5 358.8L330.5 357.7L331.5 358.4L332.5 358.5L333.5 357.7L334.5 358.7L335.5 358.3L336.5 358.2L337.5 357.8L338.5 357.8L339.5 358.0L340.5 358.4L341.5 358.4L342.5 358.7L343.5 364.9L344.5 365.3L345.5 365.7L346.5 365.2L347.5 364.8L348.5 364.3L349.5 363.9L350.5 358.6L351.5 358.0L352.5 357.3L353.5 358.3L354.5 358.4L355.5 358.2L356.5 357.5L357.5 357.3L358.5 358.3L359.5 367.1L360.5 367.1L361.5 367.0L362.5 357.7L363.5 358.2L364.5 357.9L365.5 358.1L366.5 356.9L367.5 357.2L368.5 358.2L369.5 356.8L370.5 358.2L371.5 357.7L372.5 356.7L373.5 357.0L374.5 357.1L375.5 357.5L376.5 357.9L377.5 357.2L378.5 358.0L379.5 364.6L380.5 364.6L381.5 364.6L382.5 357.4L383.5 356.8L384.5 356.9L385.5 357.2L386.5 357.0L387.5 357.2L388.5 357.7L389.5 357.0L390.5 357.2L391.5 356.7L392.5 356.4L393.5 357.1L394.5 356.9L395.5 356.6L396.5 357.1L397.5 357.4L398.5 356.6L399.5 356.3L400.5 356.4L401.5 356.5L402.5 356.3L403.5 356.5L404.5 356.6L405.5 356.8L406.5 357.1L407.5 356.5L408.5 357.4L409.5 356.8L410.5 356.2L411.5 356.3L412.5 356.4L413.5 357.0L414.5 356.7L415.5 356.6L416.5 356.3L417.5 356.7L418.5 356.2L419.5 355.8L420.5 357.0L421.5 356.2L422.5 356.0L423.5 356.6L424.5 356.4L425.5 355.6L426.5 357.1L427.5 356.2" stroke="#f41cf4" stroke-width="1.05" fill="none"/>
<rect x="427.1" y="298" width="1.2" height="134" fill="#e8e8e8"/>
</svg>

<div class="abs ax" style="left:34.6px;width:30px;text-align:center;transform-origin:50% 50%;top:271.9px">0.0</div>
<div class="abs ax" style="left:34.6px;width:30px;text-align:center;transform-origin:50% 50%;top:433.9px">0.0</div>
<div class="abs ax" style="left:81.1px;width:30px;text-align:center;transform-origin:50% 50%;top:271.9px">0.5</div>
<div class="abs ax" style="left:81.1px;width:30px;text-align:center;transform-origin:50% 50%;top:433.9px">0.5</div>
<div class="abs ax" style="left:127.5px;width:30px;text-align:center;transform-origin:50% 50%;top:271.9px">1.0</div>
<div class="abs ax" style="left:127.5px;width:30px;text-align:center;transform-origin:50% 50%;top:433.9px">1.0</div>
<div class="abs ax" style="left:174.0px;width:30px;text-align:center;transform-origin:50% 50%;top:271.9px">1.5</div>
<div class="abs ax" style="left:174.0px;width:30px;text-align:center;transform-origin:50% 50%;top:433.9px">1.5</div>
<div class="abs ax" style="left:220.5px;width:30px;text-align:center;transform-origin:50% 50%;top:271.9px">2.0</div>
<div class="abs ax" style="left:220.5px;width:30px;text-align:center;transform-origin:50% 50%;top:433.9px">2.0</div>
<div class="abs ax" style="left:267.0px;width:30px;text-align:center;transform-origin:50% 50%;top:271.9px">2.5</div>
<div class="abs ax" style="left:267.0px;width:30px;text-align:center;transform-origin:50% 50%;top:433.9px">2.5</div>
<div class="abs ax" style="left:313.5px;width:30px;text-align:center;transform-origin:50% 50%;top:271.9px">3.0</div>
<div class="abs ax" style="left:313.5px;width:30px;text-align:center;transform-origin:50% 50%;top:433.9px">3.0</div>
<div class="abs ax" style="left:359.9px;width:30px;text-align:center;transform-origin:50% 50%;top:271.9px">3.5</div>
<div class="abs ax" style="left:359.9px;width:30px;text-align:center;transform-origin:50% 50%;top:433.9px">3.5</div>
<div class="abs ax" style="left:406.4px;width:30px;text-align:center;transform-origin:50% 50%;top:271.9px">4.0</div>
<div class="abs ax" style="left:406.4px;width:30px;text-align:center;transform-origin:50% 50%;top:433.9px">4.0</div>
<div class="abs ax" style="left:452.9px;width:30px;text-align:center;transform-origin:50% 50%;top:271.9px">4.5</div>
<div class="abs ax" style="left:452.9px;width:30px;text-align:center;transform-origin:50% 50%;top:433.9px">4.5</div>
<div class="abs ax" style="left:11.8px;width:30px;text-align:right;transform-origin:100% 50%;top:127.5px">50</div>
<div class="abs ax" style="left:11.8px;width:30px;text-align:right;transform-origin:100% 50%;top:154.5px">40</div>
<div class="abs ax" style="left:11.8px;width:30px;text-align:right;transform-origin:100% 50%;top:181.5px">30</div>
<div class="abs ax" style="left:11.8px;width:30px;text-align:right;transform-origin:100% 50%;top:207.5px">20</div>
<div class="abs ax" style="left:11.8px;width:30px;text-align:right;transform-origin:100% 50%;top:234.5px">10</div>
<div class="abs ax" style="left:11.8px;width:30px;text-align:right;transform-origin:100% 50%;top:289.5px">10</div>
<div class="abs ax" style="left:11.8px;width:30px;text-align:right;transform-origin:100% 50%;top:316.5px">8</div>
<div class="abs ax" style="left:11.8px;width:30px;text-align:right;transform-origin:100% 50%;top:343.5px">6</div>
<div class="abs ax" style="left:11.8px;width:30px;text-align:right;transform-origin:100% 50%;top:369.5px">4</div>
<div class="abs ax" style="left:11.8px;width:30px;text-align:right;transform-origin:100% 50%;top:396.5px">2</div>
<div class="abs" style="left:466px;top:260.7px;width:2px;height:1px;background:#0000e0"></div>
<div class="abs ax" style="left:470.6px;transform-origin:0 50%;top:244.0px">2</div>
<div class="abs" style="left:466px;top:252.4px;width:4px;height:1px;background:#0000ff"></div>
<div class="abs" style="left:466px;top:244.1px;width:2px;height:1px;background:#0000e0"></div>
<div class="abs ax" style="left:470.6px;transform-origin:0 50%;top:227.3px">4</div>
<div class="abs" style="left:466px;top:235.8px;width:4px;height:1px;background:#0000ff"></div>
<div class="abs" style="left:466px;top:227.4px;width:2px;height:1px;background:#0000e0"></div>
<div class="abs ax" style="left:470.6px;transform-origin:0 50%;top:210.7px">6</div>
<div class="abs" style="left:466px;top:219.1px;width:4px;height:1px;background:#0000ff"></div>
<div class="abs" style="left:466px;top:210.8px;width:2px;height:1px;background:#0000e0"></div>
<div class="abs ax" style="left:470.6px;transform-origin:0 50%;top:194.1px">8</div>
<div class="abs" style="left:466px;top:202.5px;width:4px;height:1px;background:#0000ff"></div>
<div class="abs" style="left:466px;top:194.2px;width:2px;height:1px;background:#0000e0"></div>
<div class="abs ax" style="left:470.6px;transform-origin:0 50%;top:177.5px">10</div>
<div class="abs" style="left:466px;top:185.9px;width:4px;height:1px;background:#0000ff"></div>
<div class="abs" style="left:466px;top:177.6px;width:2px;height:1px;background:#0000e0"></div>
<div class="abs ax" style="left:470.6px;transform-origin:0 50%;top:160.8px">12</div>
<div class="abs" style="left:466px;top:169.2px;width:4px;height:1px;background:#0000ff"></div>
<div class="abs" style="left:466px;top:160.9px;width:2px;height:1px;background:#0000e0"></div>
<div class="abs ax" style="left:470.6px;transform-origin:0 50%;top:144.2px">14</div>
<div class="abs" style="left:466px;top:152.6px;width:4px;height:1px;background:#0000ff"></div>
<div class="abs" style="left:466px;top:144.3px;width:2px;height:1px;background:#0000e0"></div>
<div class="abs ax" style="left:470.6px;transform-origin:0 50%;top:127.6px">16</div>
<div class="abs" style="left:466px;top:136.0px;width:4px;height:1px;background:#0000ff"></div>
<div class="abs ax" style="left:470.6px;transform-origin:0 50%;top:289.6px">20</div>
<div class="abs ax" style="left:470.6px;transform-origin:0 50%;top:316.2px">16</div>
<div class="abs ax" style="left:470.6px;transform-origin:0 50%;top:342.8px">12</div>
<div class="abs ax" style="left:470.6px;transform-origin:0 50%;top:369.4px">8</div>
<div class="abs ax" style="left:470.6px;transform-origin:0 50%;top:396.0px">4</div>
<!-- right column -->
<div class="abs grp rg" style="left:491px;top:129.500px;width:139.500px;height:84px"></div>
<div class="abs gt tx" style="left:498px;top:123px;background:#ebebf1">Disk-Info</div>
<div class="abs tx" style="left:500px;top:138.500px">Typ:</div><div class="abs val tx" style="left:545px;top:138.500px">DVD+R</div>
<div class="abs tx" style="left:500px;top:156px">ID:</div><div class="abs val tx" style="left:545px;top:156px">MCC 004</div>
<div class="abs tx" style="left:500px;top:174px">Datum:</div><div class="abs val tx" style="left:545px;top:174px">29 Oct 2008</div>
<div class="abs tx" style="left:500px;top:192px">Label:</div><div class="abs val tx" style="left:545px;top:192px">-</div>
<div class="abs grp rg" style="left:491px;top:221px;width:139.500px;height:203px"></div>
<div class="abs gt tx" style="left:498px;top:214px;background:#eeeef4">Einstellungen</div>
<div class="abs" style="box-sizing:border-box;left:500px;top:230px;width:84px;height:21px;border:1px solid #c3c3d3;border-radius:3px;background:#fff"></div>
<div class="abs" style="left:569px;top:231px;width:14px;height:19px;background:linear-gradient(#f0f0fa 0,#ebebf6 50%,#dcdcee 50%,#e0e0f0 100%);border-left:1px solid #c9c9dd;border-radius:0 2px 2px 0"></div>
<svg class="abs" style="left:573.500px;top:238.200px" width="7" height="4" viewBox="0 0 7 4"><path d="M0 .2h7L3.500 3.900z" fill="#5558a8"/></svg>
<div class="abs tx" style="left:505px;top:235px;font-size:11.5px">4 X</div>
<div class="abs" style="box-sizing:border-box;left:592px;top:229.500px;width:23px;height:22.500px;background:#eeeef4;border:1px solid;border-color:#fff #5e5e68 #5e5e68 #fff;box-shadow:inset -1px -1px 0 #a4a4b0"></div>
<svg class="abs" style="left:596px;top:232px" width="15" height="16" viewBox="0 0 15 16"><rect x=".5" y=".5" width="13.500" height="15" fill="#fff" stroke="#000"/><path d="M4.200 8.200V6.500Q4.200 4.500 6.200 4.500H8" stroke="#0a8a0a" stroke-width="1.500" fill="none"/><path d="M7.600 2l3.200 2.500L7.600 7z" fill="#0a8a0a"/><path d="M10.400 7.800v1.700Q10.400 11.500 8.400 11.500H6.800" stroke="#0a8a0a" stroke-width="1.500" fill="none"/><path d="M7.200 9L4 11.500l3.200 2.500z" fill="#0a8a0a"/></svg>
<div class="abs tx" style="left:502px;top:261px">Start:</div>
<div class="abs inp" style="left:554px;top:256px;width:60px;height:20px"></div><div class="abs tx" style="left:558px;top:259px">0000 MB</div>
<div class="abs tx" style="left:502px;top:284px">Ende:</div>
<div class="abs inp" style="left:554px;top:279px;width:60px;height:20px"></div><div class="abs tx" style="left:558px;top:282px">4187 MB</div>
<div class="abs cb" style="top:301px"></div><div class="abs tx" style="left:518px;top:301px">Schnelles Scannen</div>
<div class="abs cb" style="top:319px"></div><div class="abs tx" style="left:518px;top:319.500px">C1/PIE anzeigen</div>
<div class="abs cb" style="top:334px"></div><div class="abs tx" style="left:518px;top:334.500px">C2/PIF anzeigen</div>
<div class="abs cb" style="top:349.500px"></div><div class="abs tx" style="left:518px;top:350px">Jitter anzeigen</div>
<div class="abs cb" style="top:365.500px"></div><div class="abs tx" style="left:518px;top:366.500px">Zeige Lesegeschw.</div>
<div class="abs cb" style="top:381px;border-color:#c4c8d4"></div><div class="abs tx" style="left:518px;top:381.500px;font-size:9.2px;color:#c3c3cf">Zeige Schreibgeschw.</div>
<svg class="abs" style="left:502px;top:319px" width="13" height="76" viewBox="0 0 13 76">
<g fill="none" stroke="#2456c8" stroke-width="1.700"><path d="M3 6l2.500 2.800L10 3.500"/><path d="M3 21l2.500 2.800L10 18.500"/><path d="M3 36.500l2.500 2.800L10 34"/><path d="M3 52.500l2.500 2.800L10 50"/></g>
<path d="M3 68l2.500 2.800L10 65.500" fill="none" stroke="#c0c4d0" stroke-width="2"/></svg>
<div class="abs btn tah" style="left:528px;top:400px;width:96px;height:20px;line-height:18px">Erweitert</div>
<div class="abs grp rg" style="left:491px;top:430px;width:139.500px;height:27px"></div>
<div class="abs tx" style="left:502px;top:437.700px">Qualitätsindex:</div><div class="abs val tx" style="left:571px;width:50px;text-align:right;top:437.700px">95</div>
<div class="abs grp rg" style="left:491px;top:462px;width:139.500px;height:57px"></div>
<div class="abs tx" style="left:502px;top:471.500px">Fortschritt:</div><div class="abs val tx" style="left:561px;width:60px;text-align:right;top:471.500px">100 %</div>
<div class="abs tx" style="left:502px;top:487.500px">Position:</div><div class="abs val tx" style="left:561px;width:60px;text-align:right;top:487.500px">4186 MB</div>
<div class="abs tx" style="left:502px;top:503.700px">Geschwindigkeit:</div><div class="abs val tx" style="left:561px;width:60px;text-align:right;top:503.700px">3.96 X</div>
<!-- bottom stats -->
<div class="abs grp" style="left:14px;top:462px;width:146px;height:57px"></div>
<div class="abs gt tx" style="left:22px;top:456.500px;color:#000;letter-spacing:-.35px;padding:0 2px 0 13.5px">PI Errors</div><div class="abs sq" style="left:24px;top:459px;background:#00f4f4"></div>
<div class="abs tx" style="left:22px;top:472.500px">Durchschnitt</div><div class="abs val tx" style="left:90px;width:60px;text-align:right;top:472.500px">4.43</div>
<div class="abs tx" style="left:22px;top:487.500px;letter-spacing:-.5px">Maximum:</div><div class="abs val tx" style="left:90px;width:60px;text-align:right;top:487.500px">33</div>
<div class="abs tx" style="left:22px;top:502.500px;letter-spacing:-.45px">Gesamt:</div><div class="abs val tx" style="left:90px;width:60px;text-align:right;top:502.500px">74251</div>
<div class="abs grp" style="left:172px;top:462px;width:146px;height:57px"></div>
<div class="abs gt tx" style="left:180px;top:456.500px;color:#000;letter-spacing:-.35px;padding:0 2px 0 13.5px">PI Failures</div><div class="abs sq" style="left:182px;top:459px;background:#f0f000"></div>
<div class="abs tx" style="left:181px;top:472.500px">Durchschnitt</div><div class="abs val tx" style="left:249px;width:60px;text-align:right;top:472.500px">0.00</div>
<div class="abs tx" style="left:181px;top:487.500px;letter-spacing:-.5px">Maximum:</div><div class="abs val tx" style="left:249px;width:60px;text-align:right;top:487.500px">2</div>
<div class="abs tx" style="left:181px;top:502.500px;letter-spacing:-.45px">Gesamt:</div><div class="abs val tx" style="left:249px;width:60px;text-align:right;top:502.500px">164</div>
<div class="abs grp" style="left:331px;top:462px;width:147px;height:43px"></div>
<div class="abs gt tx" style="left:339px;top:456.500px;color:#000;letter-spacing:-.35px;padding:0 2px 0 13.5px">Jitter</div><div class="abs sq" style="left:341px;top:459px;background:#f000f0"></div>
<div class="abs tx" style="left:340px;top:472.500px">Durchschnitt</div><div class="abs val tx" style="left:408px;width:60px;text-align:right;top:472.500px">10.76 %</div>
<div class="abs tx" style="left:340px;top:487.500px;letter-spacing:-.5px">Maximum:</div><div class="abs val tx" style="left:408px;width:60px;text-align:right;top:487.500px">12.0 %</div>
<div class="abs tx" style="left:340px;top:505.500px">PO Ausfälle:</div><div class="abs val tx" style="left:408px;width:60px;text-align:right;top:505.500px">-</div>
</div></body></html>
